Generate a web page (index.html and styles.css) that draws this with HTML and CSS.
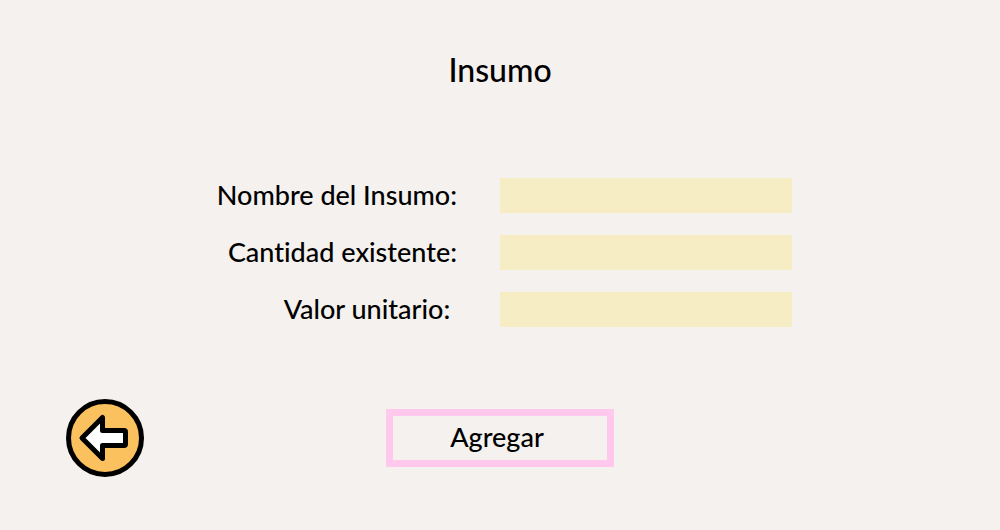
FILE: index.html
```
<!DOCTYPE html>
<html lang="es">
<head>
<meta charset="utf-8">
<meta name="viewport" content="width=device-width, initial-scale=1">
<title>Insumo</title>
<link rel="stylesheet" href="styles.css">
</head>
<body>
<main class="page">
  <h1 class="title">Insumo</h1>
  <form class="supply-form" id="supply-form">
    <label class="label" for="nombre">Nombre del Insumo:</label>
    <input class="field" id="nombre" name="nombre" type="text">
    <label class="label" for="cantidad">Cantidad existente:</label>
    <input class="field" id="cantidad" name="cantidad" type="text">
    <label class="label" for="valor">Valor unitario:&nbsp;</label>
    <input class="field" id="valor" name="valor" type="text">
  </form>
  <footer class="actions">
    <button class="back" type="button" aria-label="Volver">
      <svg class="back-icon" viewBox="0 0 78 78" aria-hidden="true">
        <circle cx="39" cy="39" r="36.5" fill="#fbc15e" stroke="#000" stroke-width="5"/>
        <path d="M16 39 36.500 18.500V31.500H58Q59.500 31.500 59.500 33V45Q59.500 46.500 58 46.500H36.500V59.500Z" fill="#fff" stroke="#000" stroke-width="5" stroke-linejoin="round"/>
      </svg>
    </button>
    <button class="submit" type="submit" form="supply-form">Agregar</button>
  </footer>
</main>
</body>
</html>
```
FILE: styles.css
```
* {
  box-sizing: border-box;
}

body {
  margin: 0;
  background: #f5f1ee;
  color: #000;
  font-family: Lato, "Open Sans", sans-serif;
  font-weight: 500;
  font-variant-ligatures: none;
}

.page {
  min-height: 100vh;
  padding: 50px 0;
}

.title {
  margin: 0 0 88px;
  font-size: 32px;
  font-weight: 500;
  line-height: 40px;
  text-align: center;
}

.supply-form {
  display: grid;
  grid-template-columns: 1fr 1fr;
  row-gap: 22px;
}

.label {
  padding-right: 43px;
  font-size: 27px;
  line-height: 34px;
  text-align: right;
}

.field {
  width: 292px;
  max-width: 90%;
  height: 35px;
  padding: 0 8px;
  border: 0;
  border-radius: 0;
  background: #f7edc5;
  font: inherit;
  font-size: 24px;
}

.actions {
  display: grid;
  grid-template-columns: 1fr auto 1fr;
  align-items: center;
  margin-top: 72px;
}

.back {
  width: 78px;
  height: 78px;
  margin-left: 66px;
  padding: 0;
  border: 0;
  border-radius: 50%;
  background: none;
  cursor: pointer;
}

.back-icon {
  display: block;
  width: 100%;
}

.submit {
  width: 228px;
  height: 58px;
  padding: 0 6px 4px 0;
  border: 7px solid #ffc8ec;
  background: transparent;
  color: inherit;
  font: inherit;
  font-size: 27px;
  cursor: pointer;
}
```
